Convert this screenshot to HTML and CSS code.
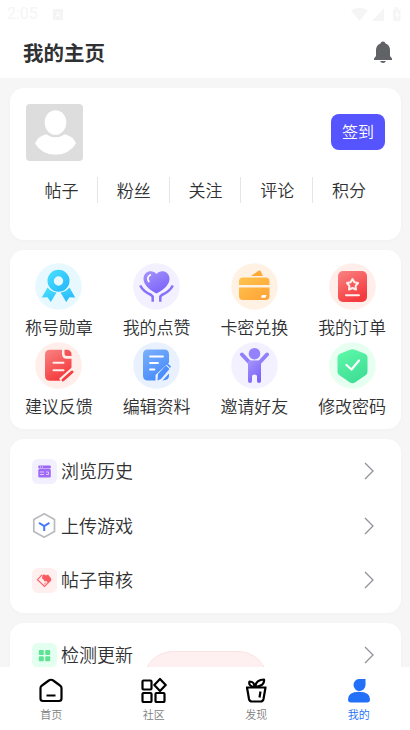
FILE: index.html
```html
<!DOCTYPE html>
<html lang="zh-CN">
<head>
<meta charset="utf-8">
<title>我的主页</title>
<link rel="stylesheet" href="styles.css">
</head>
<body>
<svg class="defs" width="0" height="0">
  <defs>
    <linearGradient id="cyan" x1="0" y1="0" x2="1" y2="1"><stop offset="0" stop-color="#4be2ff"/><stop offset="1" stop-color="#24b3fb"/></linearGradient>
    <linearGradient id="purple" x1="0" y1="0" x2="0.6" y2="1"><stop offset="0" stop-color="#a695fb"/><stop offset="1" stop-color="#7c63fa"/></linearGradient>
    <linearGradient id="orange" x1="0" y1="0" x2="1" y2="1"><stop offset="0" stop-color="#ffc34d"/><stop offset="1" stop-color="#ffa235"/></linearGradient>
    <linearGradient id="red" x1="0" y1="0" x2="0.5" y2="1"><stop offset="0" stop-color="#f98383"/><stop offset="1" stop-color="#f43b3e"/></linearGradient>
    <linearGradient id="blue" x1="0" y1="0" x2="0.5" y2="1"><stop offset="0" stop-color="#7bb1fc"/><stop offset="1" stop-color="#488cfb"/></linearGradient>
    <linearGradient id="green" x1="0" y1="0" x2="0.5" y2="1"><stop offset="0" stop-color="#5ffaaa"/><stop offset="1" stop-color="#40df96"/></linearGradient>
  </defs>
</svg>
<div class="app">
  <header class="header">
    <div class="status">
      <span class="clock">2:05</span>
      <svg class="status-app" width="10" height="11" viewBox="0 0 10 11"><rect width="10" height="11" rx="1" fill="#f4f4f4"/><path d="M2.500 8.500 5 3l2.500 5.500M3.500 6.500h3" stroke="#fff" fill="none"/></svg>
      <svg class="status-icons" width="52" height="15" viewBox="0 0 52 15"><g fill="#f5f5f5"><path d="M0 3.500Q8.500-2 17 3.500L8.500 14z"/><path d="M33 1v13H21z"/><path d="M42 2.500h2V0h3v2.500h2.500V14H42z"/></g><path d="M46.500 4 44 8.500h2v3.500l2.500-5h-2z" fill="#fff"/></svg>
    </div>
    <div class="title-row">
      <h1>我的主页</h1>
      <svg class="bell" width="20" height="22" viewBox="0 0 20 22"><path d="M10 0.500C11.300.500 12.200 1.300 12.500 2.400C15.500 3.500 17 6 17 9v6l2 2.500v1.500H1v-1.500L3 15V9c0-3 1.500-5.500 4.500-6.600C7.800 1.300 8.700.500 10 .500zM7 20h6q-1 2-3 2t-3-2z" fill="#606266"/></svg>
    </div>
  </header>

  <main class="content">
    <section class="card profile">
      <div class="profile-top">
        <svg class="avatar" width="57" height="57" viewBox="0 0 57 57"><rect width="57" height="57" rx="4" fill="#ddd"/><ellipse cx="29.500" cy="18.500" rx="10.800" ry="12.300" fill="#fff"/><path d="M20 30.200q9.500 6.200 19 0Q47.500 32.500 50 39.500Q43 50.800 29.500 50.800T9 39.500Q11.500 32.500 20 30.200z" fill="#fff"/></svg>
        <button class="sign">签到</button>
      </div>
      <div class="stats"><span>帖子</span><span>粉丝</span><span>关注</span><span>评论</span><span>积分</span></div>
    </section>

    <section class="card grid">
      <div class="tile"><svg width="47" height="47" viewBox="0 0 47 47"><circle cx="23.500" cy="23.500" r="23.300" fill="#e7f9ff"/><path d="M12.500 24.500 6.800 34.500l5.700-.2 3.300 4.700 5.700-9.500q-5-.5-9-5zM34.500 24.500l5.700 10-5.700-.2-3.300 4.700-5.700-9.500q5-.5 9-5z" fill="url(#cyan)"/><path fill-rule="evenodd" d="M23.500 6.800a11 11 0 1 1 0 22 11 11 0 0 1 0-22zm0 6.500a4.700 4.700 0 1 0 0 9.400 4.700 4.700 0 0 0 0-9.400z" fill="url(#cyan)"/></svg><span>称号勋章</span></div>
      <div class="tile"><svg width="47" height="47" viewBox="0 0 47 47"><circle cx="23.500" cy="23.500" r="23.300" fill="#f3f1ff"/><path d="M23.500 30.500C19 28.500 10.500 22.500 10.500 16C10.500 8 19.500 6 23.500 11C27.500 6 36.500 8 36.500 16C36.500 22.500 28 28.500 23.500 30.500z" fill="url(#purple)"/><path d="M15.800 18.500q-2.500-4.500 1.500-6.500" fill="none" stroke="#fff" stroke-width="1.700" stroke-linecap="round"/><path d="M7.200 22.500q3 6 11 9.500l1.500 1.500v5.300M39.800 22.500q-3 6-11 9.500l-1.500 1.500v5.300" fill="none" stroke="#8871fa" stroke-width="2.500"/></svg><span>我的点赞</span></div>
      <div class="tile"><svg width="47" height="47" viewBox="0 0 47 47"><circle cx="23.500" cy="23.500" r="23.300" fill="#fff2e4"/><path d="m20 13 8-5.500q2-.5 2 1.500l2 4z" fill="#ffa936"/><path d="M8 22v-3.500q0-4 4-4h22.500q4 0 4 4V22zM8 24.500h30.500V33q0 4-4 4H12q-4 0-4-4z" fill="url(#orange)"/><path d="M31 32h4.500l-1 2.800H30z" fill="#fff"/></svg><span>卡密兑换</span></div>
      <div class="tile"><svg width="47" height="47" viewBox="0 0 47 47"><circle cx="23.500" cy="23.500" r="23.300" fill="#ffeeea"/><rect x="9" y="8" width="29" height="31" rx="5" fill="url(#red)"/><path d="m23.500 16 1.900 3.200 3.700.8-2.500 2.800.4 3.700-3.500-1.500-3.500 1.500.4-3.700-2.500-2.800 3.700-.8zM17 32.300h13" fill="none" stroke="#fff0ed" stroke-width="2" stroke-linejoin="round" stroke-linecap="round"/></svg><span>我的订单</span></div>
      <div class="tile"><svg width="47" height="47" viewBox="0 0 47 47"><circle cx="23.500" cy="23.500" r="23.300" fill="#ffeeea"/><path d="M15 7.800h12v4q0 5 5 5h4.500v11L25 38.800H15q-5 0-5-5v-21q0-5 5-5z" fill="url(#red)"/><path d="M29.500 7.800H32q4.500.5 4.500 4.500V14H32q-2.500 0-2.500-2.500z" fill="#f45557"/><path d="M18.500 20.800h10M18.500 28.300h10" stroke="#fff0ed" stroke-width="2" stroke-linecap="round"/><path d="m26 39 13-11.500" stroke="#ffeeea" stroke-width="6"/><path d="m28 38 9-8" stroke="#f43f41" stroke-width="3" stroke-linecap="round"/></svg><span>建议反馈</span></div>
      <div class="tile"><svg width="47" height="47" viewBox="0 0 47 47"><circle cx="23.500" cy="23.500" r="23.300" fill="#e9f1ff"/><path d="M15 7.500h16q5 0 5 5v8L22.500 33v5.500H15q-5 0-5-5v-21q0-5 5-5z" fill="url(#blue)"/><path d="M17 14.500h13M17 21h8M17 27.500h4.500" stroke="#fff" stroke-width="1.800" stroke-linecap="round"/><path d="m25 32 8-8.500 3.500 3.500-8.500 10-3.500 1.500zM34 20.500l4 4-1 1.500-4-4zM29.500 38.500l6.500-7v2.500q0 4-6.500 4.500z" fill="#4d90fc"/></svg><span>编辑资料</span></div>
      <div class="tile"><svg width="47" height="47" viewBox="0 0 47 47"><circle cx="23.500" cy="23.500" r="23.300" fill="#f3f1ff"/><circle cx="23.500" cy="11.700" r="5.800" fill="#9382fb"/><path d="m11 12.500 7.500 8h10l7.500-8" fill="none" stroke="#927ffb" stroke-width="4" stroke-linecap="round" stroke-linejoin="round"/><path d="M17 19h13v20q0 2-2 2t-2-2v-5q0-1.500-2.500-1.500T21 34v5q0 2-2 2t-2-2z" fill="url(#purple)"/></svg><span>邀请好友</span></div>
      <div class="tile"><svg width="47" height="47" viewBox="0 0 47 47"><circle cx="23.500" cy="23.500" r="23.300" fill="#e6fff1"/><path d="M20.500 8q3-1.500 6 0l9.500 3.800q2.500 1 2.500 3.700v14q0 2.500-2 3.800L26 40.500q-2.500 1.500-5 0L10.500 33.300q-2-1.300-2-3.800v-14q0-2.700 2.500-3.700z" fill="url(#green)"/><path d="m17.500 23 5 4.500 7.500-9" stroke="#fff" stroke-width="2.200" fill="none" stroke-linecap="round" stroke-linejoin="round"/></svg><span>修改密码</span></div>
    </section>

    <section class="card list">
      <div class="row"><svg class="lead" width="25" height="25" viewBox="0 0 25 25"><rect width="25" height="25" rx="6" fill="#f2efff"/><rect x="6.300" y="6.500" width="12.500" height="3" rx="1" fill="#9b67f5"/><rect x="6.300" y="10" width="12.500" height="8.500" rx="1.300" fill="#a06cf7"/><path d="M8 13h4M8 15.500h4M14 13h2.500v2.500H14" stroke="#d9c5ff" fill="none"/><path d="M8 8h1m1 0h1" stroke="#eee4ff"/></svg><span>浏览历史</span><svg class="chev" width="10" height="18" viewBox="0 0 10 18"><path d="m1 1 8 8-8 8"/></svg></div>
      <div class="row"><svg class="lead" width="25" height="25" viewBox="0 0 25 25"><path d="m12.200.800 10.300 5.700v12l-10.300 5.700-10.400-5.700v-12z" stroke="#b9babd" stroke-width="1.700" fill="none"/><path d="m7 9.800 5.200 3.200 5.200-3.200M12.200 13v5" stroke="#4978fa" stroke-width="2" fill="none"/></svg><span>上传游戏</span><svg class="chev" width="10" height="18" viewBox="0 0 10 18"><path d="m1 1 8 8-8 8"/></svg></div>
      <div class="row"><svg class="lead" width="25" height="25" viewBox="0 0 25 25"><rect width="25" height="25" rx="6" fill="#ffefee"/><path d="m10 6.800-4.500 4.900 7 6.800 6.500-6.500" stroke="#fa6468" stroke-width="1.200" fill="none"/><path d="M10.500 7q2-1 3.500.5l2-1 3.500 4.500-3.500 4-1.500-2-2 .5-1-2-1.500-1z" fill="#fa5a60"/><path d="m12 16.500 2-2" stroke="#fa6468"/></svg><span>帖子审核</span><svg class="chev" width="10" height="18" viewBox="0 0 10 18"><path d="m1 1 8 8-8 8"/></svg></div>
    </section>

    <section class="card list">
      <div class="row"><svg class="lead" width="25" height="25" viewBox="0 0 25 25"><rect width="25" height="25" rx="6" fill="#e3ffef"/><g fill="#5ee294"><rect x="6.800" y="7" width="5" height="5" rx="1"/><rect x="13.200" y="7" width="5" height="5" rx="1"/><rect x="6.800" y="13.300" width="5" height="5" rx="1"/><rect x="13.200" y="13.300" width="5" height="5" rx="1"/></g></svg><span>检测更新</span><svg class="chev" width="10" height="18" viewBox="0 0 10 18"><path d="m1 1 8 8-8 8"/></svg></div>
    </section>
  </main>

  <div class="toast"></div>
  <nav class="nav">
    <div class="tab"><svg width="26" height="26" viewBox="0 0 26 26"><path d="M4 8.500Q2.500 9.300 2.500 11v10.500q0 2.500 2.500 2.500h16q2.500 0 2.500-2.500V11q0-1.700-1.500-2.500l-6.800-5Q13 2 10.800 3.500z" fill="none" stroke="#000" stroke-width="2.200"/><path d="M8.500 18.500h9" stroke="#000" stroke-width="2"/></svg><span>首页</span></div>
    <div class="tab"><svg width="26" height="26" viewBox="0 0 26 26"><g fill="none" stroke="#000" stroke-width="2.200" stroke-linejoin="round"><rect x="1.500" y="3.500" width="9" height="9" rx="1"/><rect x="1.500" y="16" width="9" height="9" rx="1"/><rect x="14.500" y="16" width="9" height="9" rx="1"/><path d="m19 2 5.700 6-5.700 6-5.700-6z"/></g></svg><span>社区</span></div>
    <div class="tab"><svg width="26" height="26" viewBox="0 0 26 26"><g fill="none" stroke="#000" stroke-width="2.200" stroke-linejoin="round"><path d="M3 10.500h20.500M4 10.500 6 22q.5 2.500 3 2.500h8.500q2.500 0 3-2.500l2-11.500"/><path d="M11.500 10Q5 9 6.500 4.500q5 0 5 5.500zM12 10Q13 2.500 21 2.500q1 6.500-9 7.500M17.500 14.500l-1 6" /></g></svg><span>发现</span></div>
    <div class="tab active"><svg width="26" height="26" viewBox="0 0 26 26"><path d="M13 2h6.500v6A6 6 0 1 1 13 2zM2 22.500Q2 14.800 13 14.800T24 22.500q0 3-3 3H5q-3 0-3-3z" fill="#226ff8"/></svg><span>我的</span></div>
  </nav>
</div>
</body>
</html>
```

FILE: styles.css
```css
* { box-sizing: border-box; }
html, body { margin: 0; height: 100%; overflow: hidden; }
body {
  background: #f6f6f6;
  color: #303133;
  font-family: "Noto Sans CJK SC", sans-serif;
  font-weight: 350;
}
.defs { position: absolute; }
svg { display: block; flex: none; }
.app { position: relative; height: 730px; display: flex; flex-direction: column; }

.header { flex: none; height: 78px; background: #fff; }
.status { display: flex; align-items: center; height: 28px; padding: 0 8px 0 7px; }
.clock { width: 46px; font: 16px/20px Roboto, sans-serif; color: #f5f5f5; }
.status-icons { margin-left: auto; margin-right: -1px; }
.title-row { display: flex; align-items: center; justify-content: space-between; height: 50px; padding: 0 17px 0 23px; }
.bell { margin-top: -2px; }
h1 { margin: -2px 0 0; font-size: 20.500px; line-height: 30px; font-weight: 600; }

.content { flex: 1; min-height: 0; overflow: hidden; padding: 10px 9px 0 10px; }
.card { background: #fff; border-radius: 14px; margin-bottom: 10px; box-shadow: 0 1px 5px rgba(0, 0, 0, 0.025); }

.profile { height: 152px; padding: 16px 16px 0; }
.profile-top { display: flex; justify-content: space-between; align-items: center; height: 57px; }
.sign {
  width: 54px; height: 36px; margin-top: -1px; padding: 0 0 2px;
  border: 0; border-radius: 8px;
  background: #5654fe; color: #fff;
  font: 350 16px/24px "Noto Sans CJK SC", sans-serif;
}
.stats { display: grid; grid-template-columns: repeat(5, 1fr); margin: 16px 1px 0 -1px; }
.stats span { height: 26px; padding-left: 1px; line-height: 25px; font-size: 17px; text-align: center; }
.stats span + span { border-left: 1px solid #e4e5e8; }

.grid { display: grid; grid-template-columns: repeat(4, 1fr); grid-auto-rows: 79px; height: 179px; padding-top: 13px; }
.tile { display: flex; flex-direction: column; align-items: center; font-size: 17px; line-height: 24px; }
.tile span { margin-top: 5px; }

.list { padding: 5px 27px 5px 22px; }
.row { display: flex; align-items: center; height: 54.600px; font-size: 18px; }
.row span { flex: 1; margin: -2px 0 0 4px; line-height: 28px; }
.chev path { fill: none; stroke: #909399; stroke-width: 1.300; }

.toast {
  position: absolute; left: 143px; top: 651px;
  width: 125px; height: 60px;
  border: 1px solid #fde2e2; border-radius: 30px;
  background: #fef0f0;
}
.nav { position: relative; flex: none; display: grid; grid-template-columns: repeat(4, 1fr); height: 63px; background: #fff; }
.tab { display: flex; flex-direction: column; align-items: center; padding-top: 10px; font-size: 11px; line-height: 16px; color: #7d7e80; }
.tab span { margin-top: 3px; }
.active { color: #226ff8; }
```
